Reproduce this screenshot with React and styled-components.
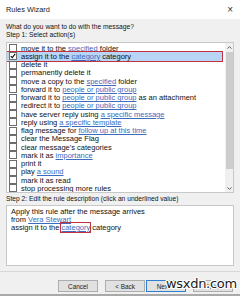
import React from "react";
import styled, { createGlobalStyle } from "styled-components";

const GlobalStyle = createGlobalStyle`
  html, body {
    margin: 0;
    padding: 0;
    background: #ffffff;
  }
  body {
    font-family: "Liberation Sans", Arial, sans-serif;
  }
`;

const Window = styled.div`
  position: relative;
  width: 240px;
  height: 296px;
  box-sizing: border-box;
  background: #f0f0f0;
  border-bottom: 2px solid #a9a9a9;
  display: flex;
  flex-direction: column;
  overflow: hidden;
  color: #111;
`;

const TitleBar = styled.div`
  height: 19px;
  background: #ffffff;
  display: flex;
  align-items: center;
  justify-content: space-between;
  padding: 0 7px 0 6px;
  font-size: 7.4px;
  color: #222;
`;

const Close = styled.span`
  font-size: 10px;
  color: #333;
`;

const Body = styled.div`
  padding: 3px 6px 0 6px;
  display: flex;
  flex-direction: column;
  font-size: 6.7px;
`;

const Label = styled.div`
  height: 8px;
  line-height: 8px;
  white-space: nowrap;
  margin-top: ${(p) => p.$top || 0}px;
`;

const ListBox = styled.div`
  height: 151px;
  margin-top: 3px;
  background: #ffffff;
  border: 1px solid #c8c8c8;
  display: flex;
  box-sizing: border-box;
  font-size: 7.5px;
`;

const Rows = styled.div`
  flex: 1;
  padding-top: 1px;
  display: flex;
  flex-direction: column;
  overflow: hidden;
`;

const Row = styled.div`
  height: 8.25px;
  flex: none;
  display: flex;
  align-items: center;
  gap: 4px;
  padding-left: 1px;
  margin-right: 3px;
  white-space: nowrap;
  box-sizing: border-box;
  background: ${(p) => (p.$selected ? "#b9d5f5" : "transparent")};
  outline: ${(p) => (p.$selected ? "1.2px solid #c3313f" : "none")};
  outline-offset: 0.5px;
`;

const Check = styled.span`
  width: 6px;
  height: 6px;
  flex: none;
  margin-left: 1px;
  border: 1px solid #6d6d6d;
  background: #ffffff;
  display: flex;
  align-items: center;
  justify-content: center;
`;

const Link = styled.span`
  color: #3d6bbd;
  text-decoration: underline;
  text-underline-offset: 0.5px;
`;

const Scrollbar = styled.div`
  width: 8px;
  flex: none;
  background: #f0f0f0;
  display: flex;
  flex-direction: column;
  align-items: center;
`;

const Arrow = styled.div`
  height: 8px;
  display: flex;
  align-items: center;
  justify-content: center;
`;

const Thumb = styled.div`
  width: 7px;
  height: 117px;
  margin-top: 1px;
  background: #cdcdcd;
`;

const Spacer = styled.div`
  flex: 1;
`;

const DescBox = styled.div`
  height: 61px;
  margin-top: 2px;
  background: #ffffff;
  border: 1px solid #c8c8c8;
  box-sizing: border-box;
  padding: 2px 4px;
  font-size: 7.5px;
`;

const DescLine = styled.div`
  height: 8px;
  line-height: 8px;
  white-space: nowrap;
`;

const Boxed = styled.span`
  outline: 1px solid #c3313f;
  outline-offset: 0.5px;
`;

const Separator = styled.div`
  height: 1px;
  margin: 5px 0 0 0;
  background: #d8d8d8;
`;

const ButtonRow = styled.div`
  display: flex;
  justify-content: flex-end;
  padding: 8px 7px 0 0;
`;

const Button = styled.div`
  width: 40px;
  height: 12px;
  box-sizing: border-box;
  background: #e1e1e1;
  border: 1px solid ${(p) => (p.$default ? "#2f7fd0" : "#adadad")};
  font-size: 6.4px;
  display: flex;
  align-items: center;
  justify-content: center;
  margin-left: ${(p) => p.$gap}px;
  color: #222;
`;

const Watermark = styled.div`
  position: absolute;
  left: 166px;
  top: 276px;
  font-family: "DejaVu Sans", sans-serif;
  font-size: 13px;
  color: #1c1c1c;
  letter-spacing: -0.3px;
  text-shadow: 1px 0 #fff, -1px 0 #fff, 0 1px #fff, 0 -1px #fff, 1px 1px #fff,
    -1px -1px #fff, 1px -1px #fff, -1px 1px #fff;
`;

const CheckMark = () => (
  <svg width="6" height="6" viewBox="0 0 6 6">
    <path d="M0.8 3.1 L2.3 4.7 L5.2 0.9" fill="none" stroke="#111" strokeWidth="1.1" />
  </svg>
);

const actions = [
  ["move it to the ", "specified", " folder"],
  ["assign it to the ", "category", " category", true],
  ["delete it"],
  ["permanently delete it"],
  ["move a copy to the ", "specified", " folder"],
  ["forward it to ", "people or public group", ""],
  ["forward it to ", "people or public group", " as an attachment"],
  ["redirect it to ", "people or public group", ""],
  ["have server reply using ", "a specific message", ""],
  ["reply using ", "a specific template", ""],
  ["flag message for ", "follow up at this time", ""],
  ["clear the Message Flag"],
  ["clear message's categories"],
  ["mark it as ", "importance", ""],
  ["print it"],
  ["play ", "a sound", ""],
  ["mark it as read"],
  ["stop processing more rules"],
];

export default function App() {
  return (
    <>
      <GlobalStyle />
      <Window>
        <TitleBar>
          <span>Rules Wizard</span>
          <Close>×</Close>
        </TitleBar>
        <Body>
          <Label $top={1}>What do you want to do with the message?</Label>
          <Label>Step 1: Select action(s)</Label>
          <ListBox>
            <Rows>
              {actions.map(([pre, link, post, selected], i) => (
                <Row key={i} $selected={selected}>
                  <Check>{selected && <CheckMark />}</Check>
                  <span>
                    {pre}
                    {link && <Link>{link}</Link>}
                    {post}
                  </span>
                </Row>
              ))}
            </Rows>
            <Scrollbar>
              <Arrow>
                <svg width="5" height="3" viewBox="0 0 5 3">
                  <path d="M0.5 2.6 L2.5 0.6 L4.5 2.6" fill="none" stroke="#606060" strokeWidth="1" />
                </svg>
              </Arrow>
              <Thumb />
              <Spacer />
              <Arrow>
                <svg width="5" height="3" viewBox="0 0 5 3">
                  <path d="M0.5 0.4 L2.5 2.4 L4.5 0.4" fill="none" stroke="#606060" strokeWidth="1" />
                </svg>
              </Arrow>
            </Scrollbar>
          </ListBox>
          <Label $top={2}>Step 2: Edit the rule description (click an underlined value)</Label>
          <DescBox>
            <DescLine>Apply this rule after the message arrives</DescLine>
            <DescLine>
              from <Link>Vera Stewart</Link>
            </DescLine>
            <DescLine>
              assign it to the <Boxed><Link>category</Link></Boxed> category
            </DescLine>
          </DescBox>
        </Body>
        <Separator />
        <ButtonRow>
          <Button $gap={0}>Cancel</Button>
          <Button $gap={7}>&lt; Back</Button>
          <Button $gap={1} $default>Next &gt;</Button>
          <Button $gap={7}>Finish</Button>
        </ButtonRow>
        <Watermark>wsxdn.com</Watermark>
      </Window>
    </>
  );
}
